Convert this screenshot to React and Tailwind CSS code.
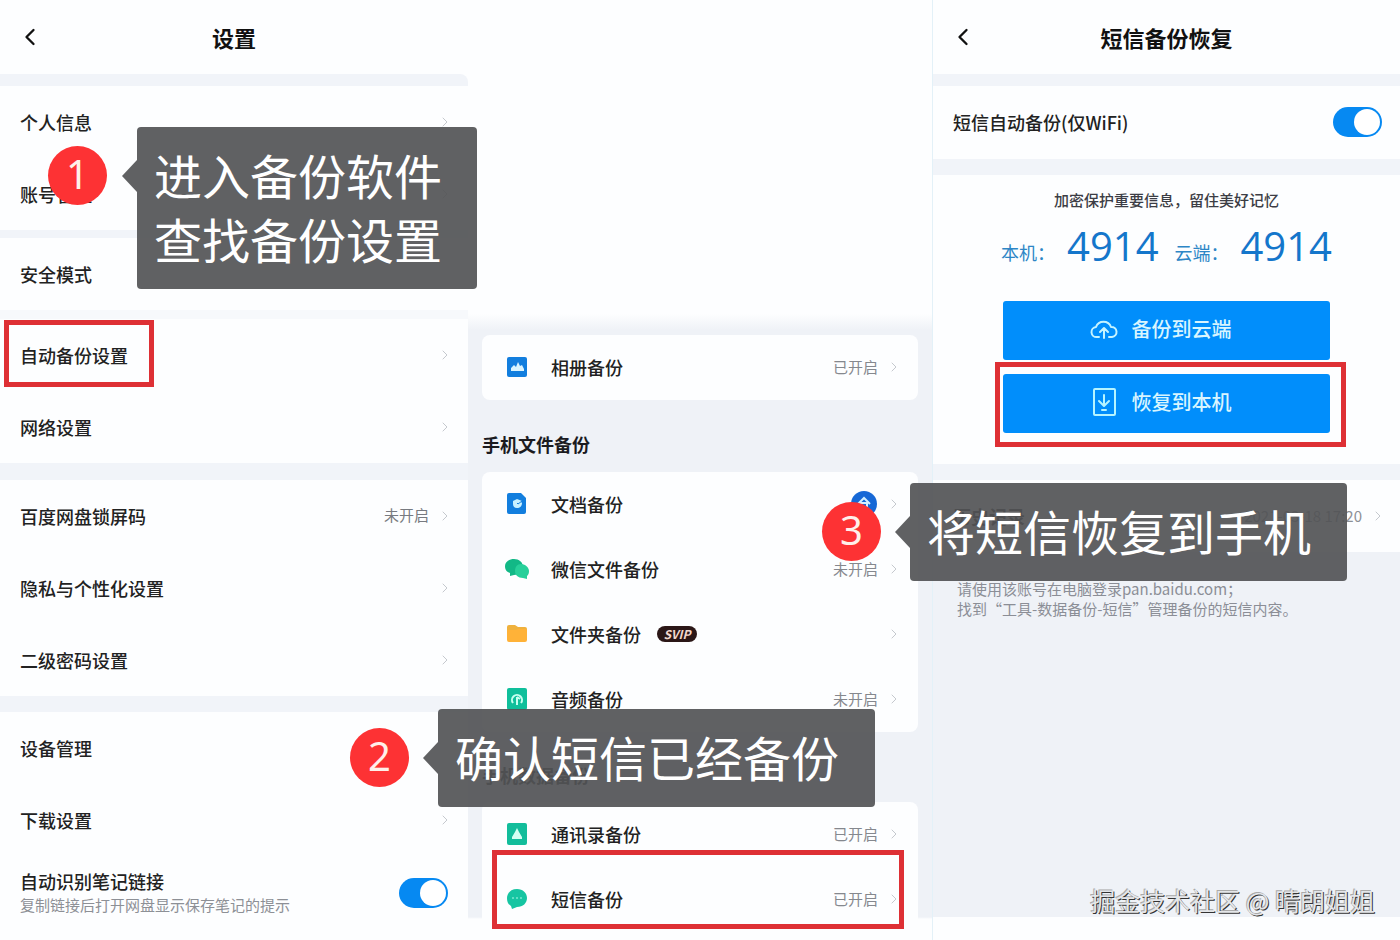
import React from "react";
import { ChevronLeft, ChevronRight } from "lucide-react";

const Header = ({ title }) => (
  <header className="grid h-[74px] grid-cols-[60px_1fr_60px] items-center bg-[#fdfeff]">
    <button type="button" aria-label="返回" className="pl-4 text-[#111]">
      <ChevronLeft size={28} strokeWidth={2} />
    </button>
    <h1 className="pb-px text-center text-[22px] leading-8 font-bold text-[#111]">{title}</h1>
  </header>
);

const Arrow = () => (
  <ChevronRight size={16} strokeWidth={1} className="shrink-0 text-[#a9adb5]" />
);

const Toggle = ({ label }) => (
  <input
    type="checkbox"
    role="switch"
    aria-label={label}
    defaultChecked
    className="relative h-[30px] w-[49px] shrink-0 cursor-pointer appearance-none rounded-full bg-[#b9bec7] checked:bg-[#0689f2] before:absolute before:top-[2px] before:left-[2px] before:size-[26px] before:rounded-full before:bg-white checked:before:left-[21px]"
  />
);

const SettingRow = ({ label, status, arrow = true }) => (
  <button type="button" className="flex h-[72px] w-full items-center pr-[15px] pb-px pl-5 text-left">
    <span className="flex-1 text-lg font-medium text-[#222]">{label}</span>
    {status && <span className="mr-2 text-[15px] text-[#777a80]">{status}</span>}
    {arrow && <Arrow />}
  </button>
);

const Gap = ({ className }) => <div className={`bg-[#f1f4f9] ${className}`} />;

const BackupRow = ({ icon, label, status, badge }) => (
  <button type="button" className="flex h-[65px] w-full items-center pr-4 pb-px pl-[23px] text-left">
    <span className="mr-[22px] flex w-6 justify-center">{icon}</span>
    <span className="text-lg font-medium text-[#222]">{label}</span>
    {badge && (
      <span className="ml-4 flex h-4 w-10 items-center justify-center rounded-full bg-[#2b1717] text-xs font-bold text-[#f3d8cd] italic">
        {badge}
      </span>
    )}
    <span className="mr-2 ml-auto text-[15px] text-[#85888e]">{status}</span>
    <Arrow />
  </button>
);

const AlbumIcon = () => (
  <svg width="22" height="22" viewBox="0 0 22 22">
    <rect x="1" y="1" width="20" height="20" rx="2" fill="#127ede" />
    <path d="M5 15v-3l3-3 2 2 2-5 2 4 2-1 2 4v2z" fill="#d9f4ff" />
  </svg>
);

const DocIcon = () => (
  <svg width="22" height="22" viewBox="0 0 22 22">
    <path d="M3 0h12l5 5v14a2 2 0 0 1-2 2H3a2 2 0 0 1-2-2V2a2 2 0 0 1 2-2z" fill="#127ede" />
    <path d="M7 8l4-2 5 2-1 1 1 1c0 3-2 5-5 5s-4-2-4-4z" fill="#c9f1ff" />
    <path d="M11 10l1 1 4-3" fill="none" stroke="#127ede" />
  </svg>
);

const WechatIcon = () => (
  <svg width="24" height="22" viewBox="0 0 24 22">
    <path d="M9 1c5 0 9 3 9 8s-4 8-9 8l-4 1v-3c-3-1-5-3-5-7 0-4 4-7 9-7z" fill="#12b886" />
    <path d="M16 6c5 0 8 4 8 7 0 3-1 4-2 5v3l-4-1c-5 0-8-3-8-7s2-7 6-7z" fill="#27d09a" />
  </svg>
);

const FolderIcon = () => (
  <svg width="22" height="20" viewBox="0 0 22 20">
    <path d="M1 3a2 2 0 0 1 2-2h6l3 2h7a2 2 0 0 1 2 2v3H1z" fill="#efb13d" />
    <path d="M1 6l9 0 2-1h9v11a2 2 0 0 1-2 2H3a2 2 0 0 1-2-2z" fill="#ffb238" />
  </svg>
);

const AudioIcon = () => (
  <svg width="22" height="22" viewBox="0 0 22 22">
    <rect x="1" y="0" width="20" height="22" rx="2" fill="#0fbf9b" />
    <path d="M7 15a5 5 0 1 1 8 0M11 9v8M11 9l3 2" fill="none" stroke="#c7fff0" strokeWidth="2" />
  </svg>
);

const ContactIcon = () => (
  <svg width="20" height="22" viewBox="0 0 20 22">
    <rect x="0" y="0" width="20" height="22" rx="2" fill="#12bd9b" />
    <path d="M10 5l2 4 3 5v2H5v-2l3-5z" fill="#d3fff3" />
  </svg>
);

const SmsIcon = () => (
  <svg width="22" height="22" viewBox="0 0 22 22">
    <path d="M11 1c6 0 10 4 10 9s-4 9-10 9l-5 2-1-3c-3-2-4-4-4-8 0-5 4-9 10-9z" fill="#16c5a2" />
    <path d="M6 10h2M10 10h2M14 10h2" stroke="#7ae8d0" strokeWidth="1.5" />
  </svg>
);

const CloudUpIcon = () => (
  <svg width="28" height="24" viewBox="0 0 28 24" fill="none" stroke="#c5f3ff" strokeWidth="2" strokeLinecap="round" strokeLinejoin="round">
    <path d="M9 20H7a5 5 0 0 1-1-10 8 8 0 0 1 15 0 5 5 0 0 1 1 10h-3" />
    <path d="M14 21v-9M10 15l4-4 4 4" />
  </svg>
);

const PhoneDownIcon = () => (
  <svg width="28" height="30" viewBox="0 0 28 30" fill="none" stroke="#b5f4ff" strokeWidth="2" strokeLinecap="round" strokeLinejoin="round">
    <rect x="4" y="2" width="21" height="26" rx="1" />
    <path d="M14 8v10M9 14l5 5 5-5M12 23h4" />
  </svg>
);

const ActionButton = ({ icon, label }) => (
  <button
    type="button"
    className="flex h-[59px] w-full items-center justify-center gap-[14px] rounded-[3px] bg-[#018efb] pr-3 pb-[3px] text-xl font-medium text-[#d8f5ff]"
  >
    {icon}
    {label}
  </button>
);

// Dark callout with a tail on its left side
const Callout = ({ className, tail = "top-[33px]", children }) => (
  <div className={`absolute z-20 rounded bg-[#535456]/92 pt-[15px] pb-[19px] pl-[17px] text-5xl leading-[64px] whitespace-nowrap text-white ${className}`}>
    <div className={`absolute right-full h-8 w-[15px] bg-[#535456]/92 [clip-path:polygon(100%_0,0_50%,100%_100%)] ${tail}`} />
    {children}
  </div>
);

const Step = ({ n, className }) => (
  <div className={`absolute z-20 flex size-[59px] items-center justify-center rounded-full bg-[#fd3234] pb-1 font-['Noto_Sans'] text-[40px] leading-none text-[#fff0ea] ${className}`}>
    {n}
  </div>
);

const Frame = ({ className }) => (
  <div className={`pointer-events-none absolute z-10 border-[5px] border-[#de3035] ${className}`} />
);

const SettingsScreen = () => (
  <section className="relative bg-[#fdfeff]">
    <Header title="设置" />
    <Gap className="h-3 rounded-tr-lg" />
    <SettingRow label="个人信息" />
    <SettingRow label="账号管理" />
    <Gap className="h-2" />
    <SettingRow label="安全模式" arrow={false} />
    <Gap className="h-[9px] opacity-50" />
    <div className="relative">
      <SettingRow label="自动备份设置" />
      <Frame className="top-px left-1 h-[67px] w-[150px]" />
    </div>
    <SettingRow label="网络设置" />
    <Gap className="h-[17px]" />
    <SettingRow label="百度网盘锁屏码" status="未开启" />
    <SettingRow label="隐私与个性化设置" />
    <SettingRow label="二级密码设置" />
    <Gap className="h-4" />
    <SettingRow label="设备管理" arrow={false} />
    <SettingRow label="下载设置" />
    <div className="flex h-[74px] items-center justify-between pr-5 pl-5">
      <div>
        <p className="text-lg leading-6 font-medium text-[#222]">自动识别笔记链接</p>
        <p className="text-[15px] leading-6 text-[#8d9096]">复制链接后打开网盘显示保存笔记的提示</p>
      </div>
      <Toggle label="自动识别笔记链接" />
    </div>

    <Step n="1" className="top-[146px] left-[48px]" />
    <Callout className="top-[127px] left-[137px] w-[340px]">
      进入备份软件
      <br />
      查找备份设置
    </Callout>
    <Step n="2" className="top-[728px] left-[350px]" />
    <Callout className="top-[709px] left-[438px] w-[437px]">确认短信已经备份</Callout>
  </section>
);

const BackupScreen = () => (
  <section className="relative bg-[linear-gradient(to_bottom,#fdfeff_314px,#eff2f7_330px,#eff2f7_917px,#fdfeff_919px)] px-[14px] pt-[335px]">
    <div className="rounded-lg bg-[#fdfeff]">
      <BackupRow icon={<AlbumIcon />} label="相册备份" status="已开启" />
    </div>
    <h2 className="flex h-[72px] items-center pt-4 text-lg font-bold text-[#1b1b1f]">手机文件备份</h2>
    <div className="rounded-lg bg-[#fdfeff]">
      <BackupRow
        icon={<DocIcon />}
        label="文档备份"
        status={
          <svg width="28" height="28" viewBox="0 0 28 28">
            <circle cx="14" cy="14" r="13" fill="#1668d6" />
            <path d="M8 14l6-6 6 6M11 18v-5h6v5" fill="none" stroke="#d4f0ff" strokeWidth="2" />
          </svg>
        }
      />
      <BackupRow icon={<WechatIcon />} label="微信文件备份" status="未开启" />
      <BackupRow icon={<FolderIcon />} label="文件夹备份" badge="SVIP" />
      <BackupRow icon={<AudioIcon />} label="音频备份" status="未开启" />
    </div>
    <h2 className="flex h-[70px] items-center pt-4 text-lg font-bold text-[#1b1b1f]">手机数据备份</h2>
    <div className="relative rounded-lg bg-[#fdfeff]">
      <BackupRow icon={<ContactIcon />} label="通讯录备份" status="已开启" />
      <BackupRow icon={<SmsIcon />} label="短信备份" status="已开启" />
      <Frame className="right-[14px] bottom-[3px] left-[10px] h-[79px]" />
    </div>
  </section>
);

const RestoreScreen = () => (
  <section className="relative flex flex-col border-l border-[#e3f1f8] bg-[#fdfeff]">
    <Header title="短信备份恢复" />
    <Gap className="h-3" />
    <div className="flex h-[73px] items-center justify-between pr-[18px] pb-px pl-5">
      <span className="text-lg font-medium text-[#222]">短信自动备份(仅WiFi)</span>
      <Toggle label="短信自动备份(仅WiFi)" />
    </div>
    <Gap className="h-4" />
    <div className="px-[70px] pt-[13px] pb-[31px]">
      <p className="text-center text-[15px] leading-6 font-medium text-[#3c3d45]">加密保护重要信息，留住美好记忆</p>
      <p className="mt-1 flex h-[60px] items-center justify-center text-lg whitespace-nowrap text-[#2d86c6]">
        <span className="pt-3">本机：</span>
        <span className="mr-4 ml-3 font-['Open_Sans'] text-[40px] leading-[56px] text-[#1476cb]">4914</span>
        <span className="pt-3">云端：</span>
        <span className="ml-3 font-['Open_Sans'] text-[40px] leading-[56px] text-[#1476cb]">4914</span>
      </p>
      <div className="mt-[25px]">
        <ActionButton icon={<CloudUpIcon />} label="备份到云端" />
      </div>
      <div className="relative mt-[14px]">
        <ActionButton icon={<PhoneDownIcon />} label="恢复到本机" />
        <Frame className="-top-3 -right-4 -bottom-[14px] -left-2" />
      </div>
    </div>
    <Gap className="h-4" />
    <button type="button" className="flex h-[72px] items-center pr-[14px] pl-5 text-left">
      <span className="flex-1 text-lg font-bold text-[#222]">历史记录</span>
      <span className="mr-2 text-[15px] text-[#8d9096]">2021-03-18 17:20</span>
      <Arrow />
    </button>
    <div className="h-[365px] bg-[#eff2f7] px-6 pt-[27px] text-[15px] leading-5 text-[#8b8e96]">
      <p>请使用该账号在电脑登录pan.baidu.com；</p>
      <p>找到“工具-数据备份-短信”管理备份的短信内容。</p>
    </div>

    <Step n="3" className="top-[502px] -left-[111px]" />
    <Callout className="top-[483px] -left-[23px] w-[437px]">将短信恢复到手机</Callout>
    <p className="absolute right-[25px] bottom-5 text-[25px] leading-10 whitespace-nowrap text-[#e4e6e9] [text-shadow:1px_1px_0_#333,-1px_-1px_0_#aaa]">
      掘金技术社区 @ 晴朗姐姐
    </p>
  </section>
);

const App = () => (
  <main className="grid min-h-screen grid-cols-[minmax(0,468fr)_minmax(0,464fr)_minmax(0,468fr)] overflow-hidden bg-[#fdfeff] font-['Noto_Sans_CJK_SC',sans-serif]">
    <SettingsScreen />
    <BackupScreen />
    <RestoreScreen />
  </main>
);

export default App;
